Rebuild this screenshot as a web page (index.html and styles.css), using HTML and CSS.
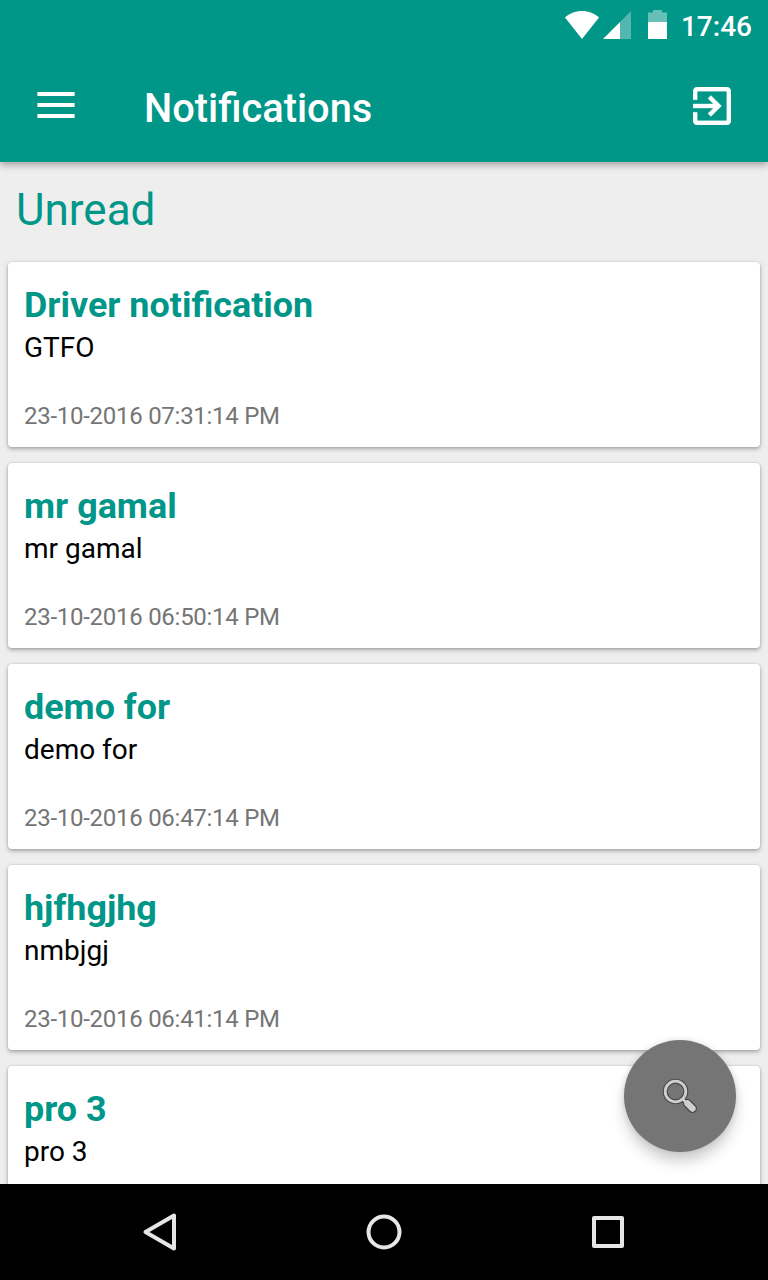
FILE: index.html
```
<!DOCTYPE html>
<html lang="en">
<head>
    <meta charset="UTF-8">
    <meta name="viewport" content="width=device-width, initial-scale=1.0">
    <title>Notifications</title>
    <link rel="stylesheet" href="styles.css">
</head>
<body>

    <header class="app-header">
        <div class="status-bar">
            <svg class="status-icons" width="104" height="50" viewBox="0 0 104 50">
                <!-- wifi -->
                <path d="M1 17.5C5.5 13.5 11 11 18 11S30.5 13.5 35 17.5L18 39Z" fill="#fff"/>
                <!-- signal -->
                <path d="M67 11V39H56V22Z" fill="#fff" opacity="0.32"/>
                <path d="M56 22V39H39Z" fill="#fff"/>
                <!-- battery -->
                <path d="M84 22V12.5H89V10H98V12.5H103V22Z" fill="#fff" opacity="0.4"/>
                <path d="M84 22H103V39H84Z" fill="#fff"/>
            </svg>
            <span class="clock">17:46</span>
        </div>
        <div class="toolbar">
            <svg class="menu-icon" width="38" height="28" viewBox="0 0 38 28">
                <path d="M0.4 0H37.6V4H0.4ZM0.4 11H37.6V15H0.4ZM0.4 22H37.6V26H0.4Z" fill="#fff"/>
            </svg>
            <h1 class="toolbar-title">Notifications</h1>
            <svg class="exit-icon" width="38" height="38" viewBox="3 3 18 18" fill="#fff" stroke="#fff" stroke-width="0.15">
                <path d="M10.09 15.59L11.5 17l5-5-5-5-1.41 1.41L12.67 11H3v2h9.67l-2.58 2.59zM19 3H5c-1.11 0-2 .9-2 2v4h2V5h14v14H5v-4H3v4c0 1.1.89 2 2 2h14c1.1 0 2-.9 2-2V5c0-1.1-.9-2-2-2z"/>
            </svg>
        </div>
    </header>

    <main class="content">
        <h2 class="section-title">Unread</h2>

        <div class="card">
            <h3 class="card-title">Driver notification</h3>
            <p class="card-text">GTFO</p>
            <p class="card-date">23-10-2016 07:31:14 PM</p>
        </div>
        <div class="card">
            <h3 class="card-title">mr gamal</h3>
            <p class="card-text">mr gamal</p>
            <p class="card-date">23-10-2016 06:50:14 PM</p>
        </div>
        <div class="card">
            <h3 class="card-title">demo for</h3>
            <p class="card-text">demo for</p>
            <p class="card-date">23-10-2016 06:47:14 PM</p>
        </div>
        <div class="card">
            <h3 class="card-title">hjfhgjhg</h3>
            <p class="card-text">nmbjgj</p>
            <p class="card-date">23-10-2016 06:41:14 PM</p>
        </div>
        <div class="card">
            <h3 class="card-title">pro 3</h3>
            <p class="card-text">pro 3</p>
        </div>

        <button class="fab" aria-label="Search">
            <svg width="36" height="36" viewBox="0 0 36 36" fill="none" stroke-linecap="round">
                <path d="M20.5 21L23.5 24" stroke="#484848" stroke-width="5"/>
                <path d="M25.5 25.5L30.5 30.5" stroke="#484848" stroke-width="9"/>
                <circle cx="13.5" cy="13.5" r="10.3" stroke="#484848" stroke-width="5"/>
                <circle cx="13.5" cy="13.5" r="10.3" stroke="#cfcfcf" stroke-width="2.8"/>
                <path d="M20.8 21.2L24 24.5" stroke="#cfcfcf" stroke-width="2.6"/>
                <path d="M25.5 25.5L30.5 30.5" stroke="#cfcfcf" stroke-width="6.4"/>
            </svg>
        </button>
    </main>

    <nav class="nav-bar">
        <svg width="40" height="40" viewBox="0 0 40 40">
            <path d="M5.5 20L34 3.6V36.4Z"/>
        </svg>
        <svg width="40" height="40" viewBox="0 0 40 40">
            <circle cx="20" cy="20" r="15.5"/>
        </svg>
        <svg width="40" height="40" viewBox="0 0 40 40">
            <rect x="6" y="6" width="28" height="28"/>
        </svg>
    </nav>

</body>
</html>
```
FILE: styles.css
```
* {
    box-sizing: border-box;
    margin: 0;
    padding: 0;
}

body {
    display: flex;
    flex-direction: column;
    height: 1280px;
    overflow: hidden;
    background: #eeeeee;
    font-family: Roboto, "Liberation Sans", sans-serif;
}

svg {
    display: block;
    flex: none;
}

/* Header */
.app-header {
    flex: none;
    height: 162px;
    background: #009688;
    color: #fff;
    box-shadow: 0 3px 7px rgba(0, 0, 0, 0.32);
    z-index: 1;
}

.status-bar {
    display: flex;
    justify-content: flex-end;
    height: 50px;
    padding-right: 16px;
}

.clock {
    margin-left: 13px;
    font-size: 28px;
    font-weight: 500;
    line-height: 53px;
}

.toolbar {
    display: flex;
    align-items: center;
    height: 112px;
    padding: 0 37px 0 37px;
}

.toolbar-title {
    flex: 1;
    margin-left: 69px;
    padding-top: 6px;
    font-size: 39.8px;
    font-weight: 500;
    line-height: 48px;
}

/* Content */
.content {
    position: relative;
    flex: 1;
    min-height: 0;
    padding: 0 8px;
    overflow: hidden;
}

.section-title {
    height: 100px;
    padding-left: 8px;
    color: #009688;
    font-size: 44px;
    font-weight: 400;
    line-height: 97px;
}

.card {
    height: 185px;
    margin-bottom: 16px;
    padding: 19px 16px 17px;
    background: #fff;
    border-radius: 4px;
    box-shadow: 0 2px 4px rgba(0, 0, 0, 0.3), 0 0 2px rgba(0, 0, 0, 0.15);
}

.card-title {
    color: #009688;
    font-size: 35.9px;
    font-weight: 700;
    line-height: 48px;
}

.card-text {
    color: #000;
    font-size: 28px;
    line-height: 38px;
}

.card-date {
    margin-top: 35px;
    color: #757575;
    font-size: 24px;
    letter-spacing: -0.27px;
    line-height: 28px;
}

/* Floating search button */
.fab {
    position: absolute;
    right: 32px;
    bottom: 32px;
    display: flex;
    align-items: center;
    justify-content: center;
    width: 112px;
    height: 112px;
    border: none;
    border-radius: 50%;
    background: #757575;
    box-shadow: 0 10px 14px rgba(0, 0, 0, 0.18), 0 0 6px rgba(0, 0, 0, 0.12);
}

/* Navigation bar */
.nav-bar {
    display: flex;
    flex: none;
    align-items: center;
    justify-content: center;
    gap: 184px;
    height: 96px;
    background: #000;
    fill: none;
    stroke: #e6e6e6;
    stroke-width: 4;
    stroke-linejoin: round;
}
```
